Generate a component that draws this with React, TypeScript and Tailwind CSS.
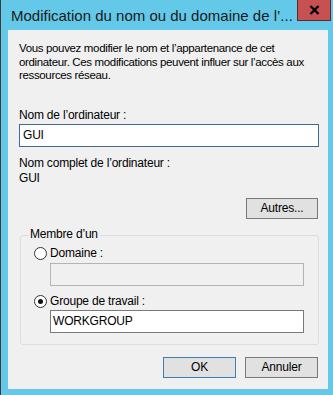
export default function App() {
  const font = { fontFamily: '"Liberation Sans", Arial, sans-serif' };
  return (
    <div
      className="w-[333px] h-[395px] bg-[#64c9e8] border-l border-[#3a3a3a] flex flex-col text-black overflow-hidden"
      style={font}
    >
      {/* title bar */}
      <div className="h-[30px] flex items-start justify-between shrink-0">
        <div className="pl-[10px] pt-[7px] text-[15px] leading-[17px] text-[#1a1a1a] whitespace-nowrap">
          Modification du nom ou du domaine de l’...
        </div>
        <div className="mr-[2px] w-[34px] h-[21px] bg-[#c75050] border border-[#5a2a2a] border-t-0 flex items-center justify-center">
          <svg width="11" height="10" viewBox="0 0 11 10">
            <path d="M1.5 1 L9.5 9 M9.5 1 L1.5 9" stroke="#000" strokeWidth="2.4" />
          </svg>
        </div>
      </div>

      {/* client area */}
      <div className="ml-[7px] w-[320px] h-[359px] bg-[#f0f0f0] pl-[11px] pr-[9px] text-[12px] leading-[13.5px] tracking-[-0.2px]">
        <p className="pt-[12px] w-[300px] text-[11.5px] tracking-[-0.35px]">
          Vous pouvez modifier le nom et l’appartenance de cet ordinateur. Ces modifications peuvent influer sur l’accès aux ressources réseau.
        </p>

        <div className="mt-[26px]">Nom de l’ordinateur :</div>
        <div className="mt-[2px] w-[300px] h-[23px] bg-white border border-[#3f6a94] flex items-center px-[3px]">
          GUI
        </div>

        <div className="mt-[10px]">Nom complet de l’ordinateur :</div>
        <div className="mt-[1px]">GUI</div>

        <div className="mt-[13px] flex justify-end pr-[1px]">
          <button className="w-[72px] h-[21px] bg-[#e1e1e1] border border-[#7a7a7a] text-[12px]">
            Autres...
          </button>
        </div>

        {/* group box */}
        <div className="mt-[16px] ml-[1px] w-[299px] h-[110px] border border-[#d5dfe5] rounded-[3px] relative px-[13px] pt-[11px]">
          <span className="absolute -top-[8px] left-[7px] bg-[#f0f0f0] px-[2px]">Membre d’un</span>

          <div className="flex items-center gap-[3px]">
            <span className="w-[13px] h-[13px] rounded-full border border-[#333] bg-white" />
            <span>Domaine :</span>
          </div>
          <div className="mt-[2px] ml-[16px] w-[254px] h-[23px] bg-[#f0f0f0] border border-[#b4b4b4]" />

          <div className="mt-[9px] flex items-center gap-[3px]">
            <span className="w-[13px] h-[13px] rounded-full border border-[#333] bg-white flex items-center justify-center">
              <span className="w-[5px] h-[5px] rounded-full bg-[#111]" />
            </span>
            <span>Groupe de travail :</span>
          </div>
          <div className="mt-[2px] ml-[16px] w-[254px] h-[23px] bg-white border border-[#7a7a7a] flex items-center px-[2px]">
            WORKGROUP
          </div>
        </div>

        <div className="mt-[12px] flex justify-end gap-[9px] pr-[1px]">
          <button className="w-[73px] h-[21px] bg-[#e1e1e1] border border-[#3c7fb1] text-[12px]">OK</button>
          <button className="w-[73px] h-[21px] bg-[#e1e1e1] border border-[#7a7a7a] text-[12px]">Annuler</button>
        </div>
      </div>
    </div>
  );
}
